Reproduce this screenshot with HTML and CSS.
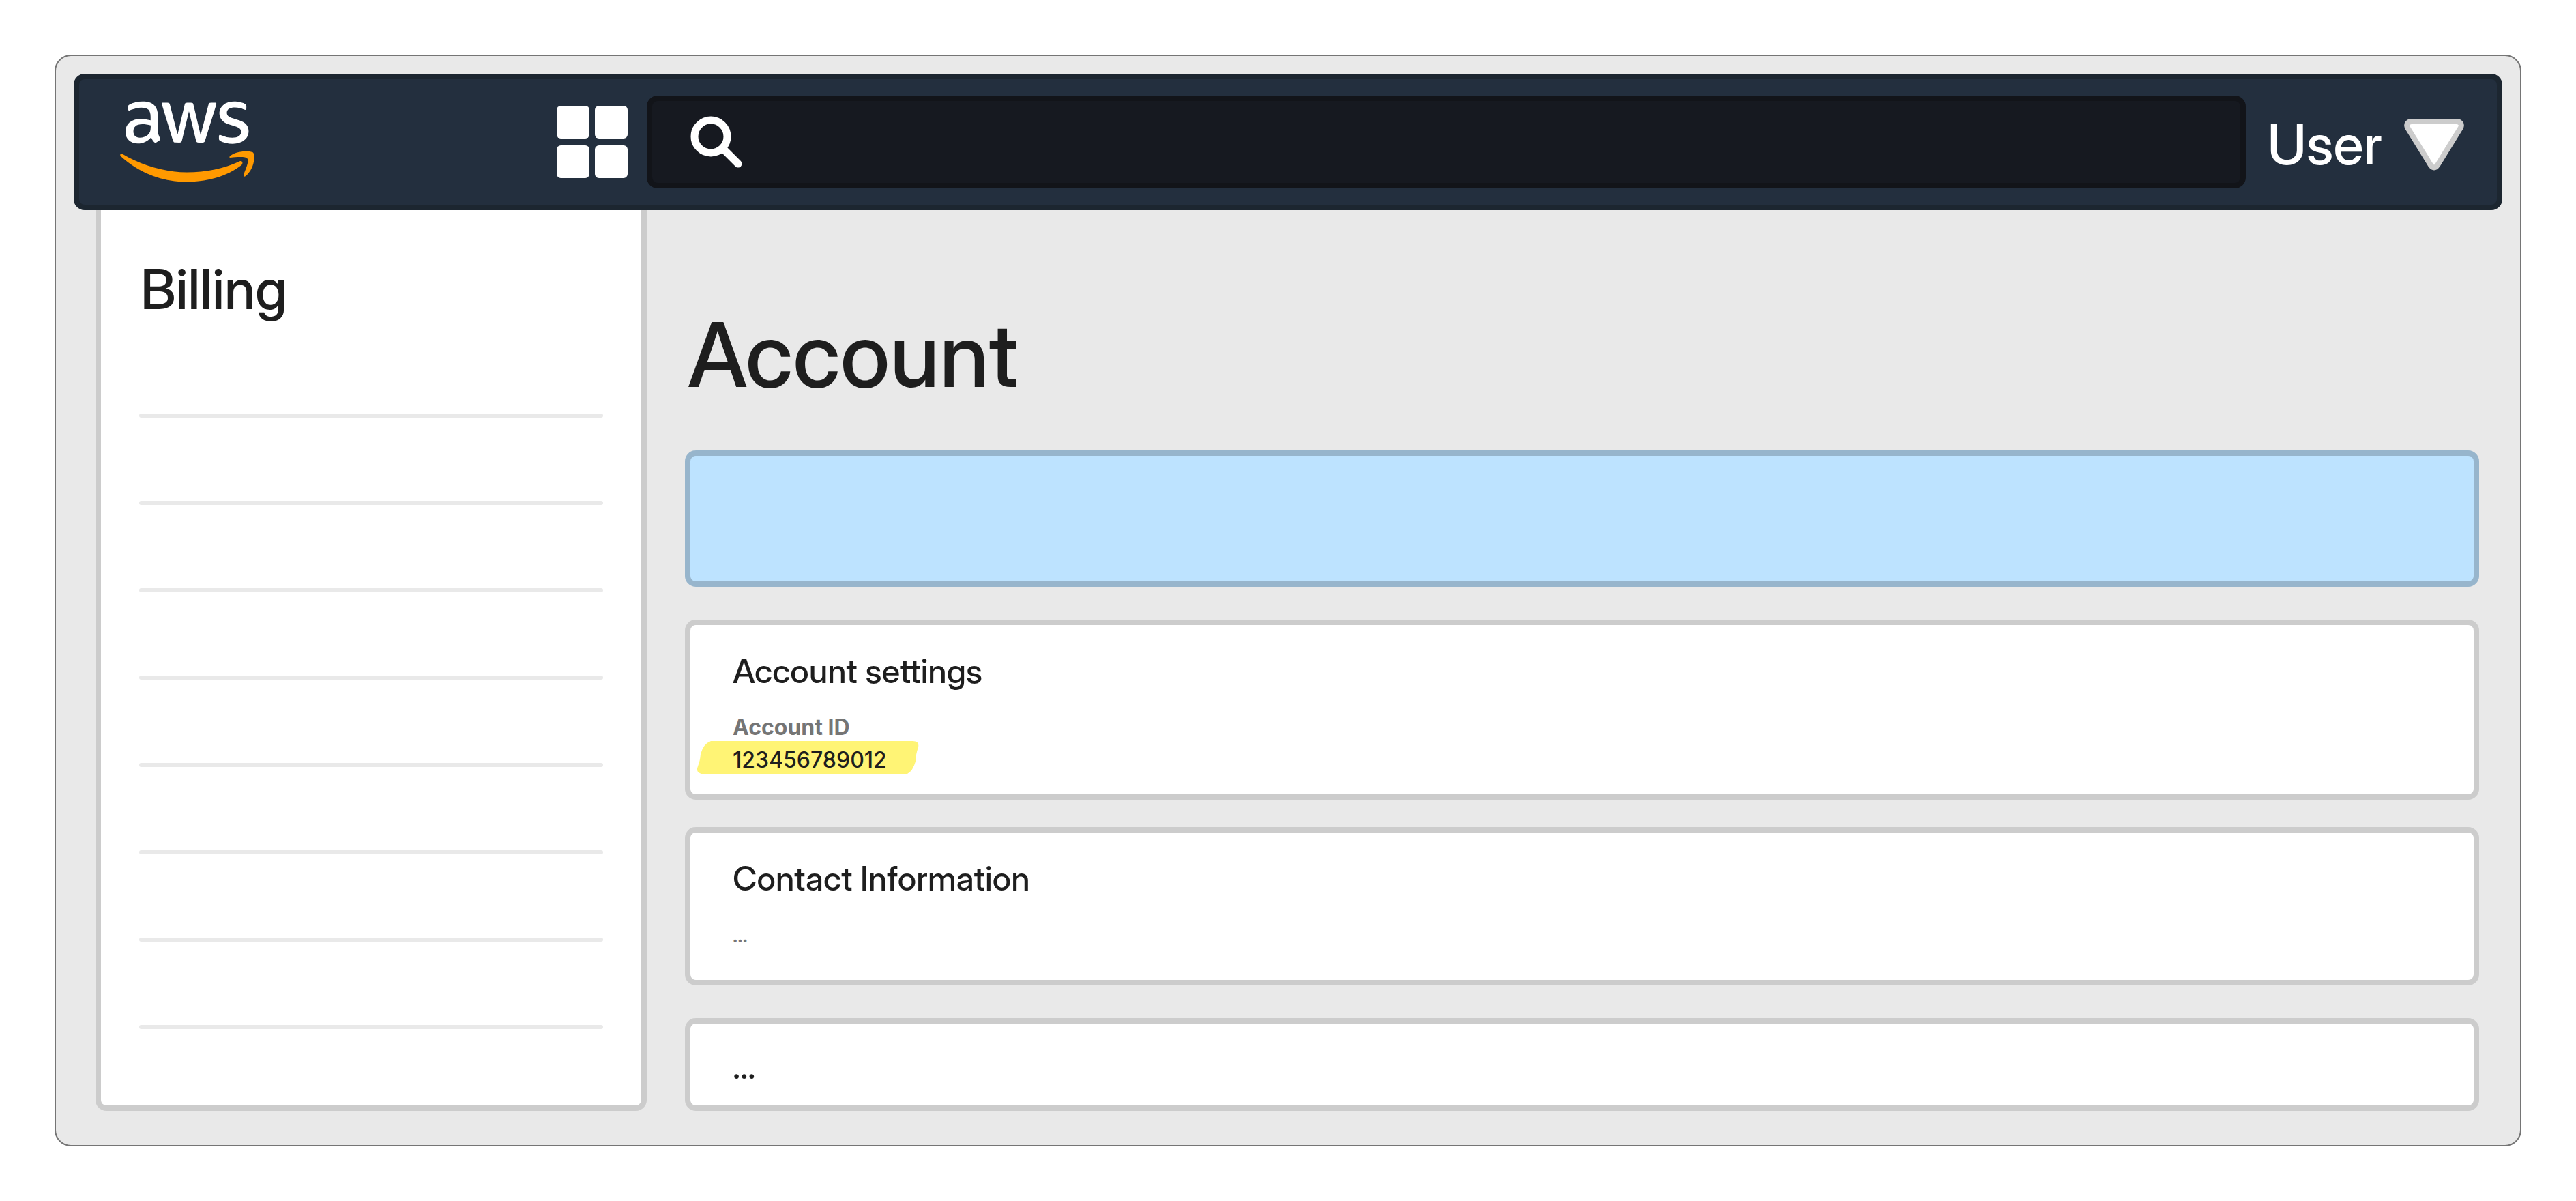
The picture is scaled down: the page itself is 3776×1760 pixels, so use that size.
FILE: index.html
```html
<!DOCTYPE html>
<html lang="en">
<head>
<meta charset="utf-8">
<title>Account</title>
<meta name="viewport" content="width=device-width, initial-scale=1">
<link rel="stylesheet" href="styles.css">
</head>
<body>
<div class="frame">
  <header class="topbar">
    <a class="logo" href="#" aria-label="aws">
      <svg viewBox="0 0 200 122" aria-hidden="true">
        <g transform="translate(0 1) scale(.66)">
          <path class="logo-word" d="M84.4 66.2c0 3.7.4 6.7 1.1 8.9.8 2.200 1.800 4.600 3.200 7.200.5.800.7 1.600.7 2.300 0 1-.6 2-1.900 3l-6.300 4.200c-.9.600-1.800.9-2.600.9-1 0-2-.5-3-1.400-1.400-1.500-2.600-3.100-3.600-4.700-1-1.700-2-3.600-3.100-5.900-7.800 9.200-17.600 13.800-29.400 13.800-8.400 0-15.100-2.400-20-7.200-4.900-4.800-7.400-11.200-7.400-19.200 0-8.500 3-15.400 9.100-20.600 6.100-5.200 14.200-7.800 24.500-7.800 3.400 0 6.900.3 10.600.8 3.700.5 7.500 1.300 11.500 2.200v-7.300c0-7.600-1.600-12.900-4.700-16-3.200-3.100-8.600-4.600-16.300-4.600-3.500 0-7.100.4-10.800 1.300-3.700.9-7.300 2-10.800 3.400-1.600.7-2.800 1.100-3.500 1.300-.7.200-1.200.3-1.600.3-1.400 0-2.100-1-2.100-3.100v-4.900c0-1.600.2-2.800.7-3.500.5-.7 1.400-1.400 2.800-2.100 3.500-1.800 7.700-3.300 12.600-4.500C39 1.800 44.200 1.200 49.700 1.200c11.900 0 20.600 2.700 26.200 8.100 5.500 5.400 8.300 13.600 8.300 24.600v32.400zM43.800 81.400c3.300 0 6.700-.6 10.300-1.800 3.600-1.200 6.800-3.400 9.500-6.400 1.600-1.900 2.800-4 3.400-6.400.6-2.400 1-5.300 1-8.700V54c-2.900-.7-6-1.300-9.200-1.700-3.200-.4-6.300-.6-9.400-.6-6.700 0-11.600 1.300-14.900 4-3.300 2.700-4.900 6.500-4.900 11.500 0 4.700 1.200 8.200 3.700 10.600 2.400 2.500 5.900 3.600 10.500 3.600z"/>
          <path class="logo-word" transform="translate(-1 0)" d="M124.100 92.200c-1.800 0-3-.3-3.800-1-.8-.6-1.500-2-2.100-3.900L94.700 10.200c-.6-2-.9-3.300-.9-4 0-1.600.8-2.500 2.400-2.500h9.800c1.900 0 3.200.3 3.900 1 .8.600 1.400 2 2 3.900l16.800 66.200 15.600-66.200c.5-2 1.100-3.300 1.900-3.900.8-.6 2.200-1 4-1h8c1.900 0 3.200.3 4 1 .8.600 1.500 2 1.900 3.900l15.800 67 17.300-67c.6-2 1.300-3.300 2-3.900.8-.6 2.100-1 3.900-1h9.300c1.600 0 2.500.8 2.500 2.500 0 .5-.1 1-.2 1.600-.1.600-.3 1.400-.7 2.500l-24.100 77.100c-.6 2-1.300 3.300-2.100 3.900-.8.600-2.100 1-3.800 1h-8.600c-1.900 0-3.200-.3-4-1-.8-.7-1.500-2-1.900-4l-15.500-64.400-15.400 64.400c-.5 2-1.100 3.300-1.900 4-.8.700-2.200 1-4 1z"/>
          <path class="logo-word" transform="translate(9 0)" d="M241.200 95c-5.200 0-10.400-.6-15.400-1.800-5-1.200-8.900-2.500-11.500-4-1.600-.9-2.700-1.900-3.100-2.800-.4-.9-.6-1.900-.6-2.800v-5.100c0-2.100.8-3.100 2.300-3.100.6 0 1.200.1 1.800.3.600.2 1.500.6 2.500 1 3.400 1.500 7.100 2.700 11 3.500 4 .8 7.900 1.200 11.900 1.200 6.300 0 11.200-1.100 14.600-3.300 3.400-2.200 5.200-5.400 5.200-9.500 0-2.800-.9-5.100-2.700-7-1.800-1.900-5.200-3.600-10.100-5.200L232.600 51.900c-7.300-2.300-12.700-5.700-16-10.200-3.300-4.400-5-9.300-5-14.500 0-4.200.9-7.900 2.700-11.100 1.800-3.200 4.200-6 7.200-8.200 3-2.300 6.400-4 10.400-5.200C235.900 1.500 240.100 1 244.500 1c2.200 0 4.500.1 6.700.4 2.300.3 4.400.7 6.500 1.100 2 .5 3.900 1 5.700 1.600 1.800.6 3.200 1.200 4.200 1.800 1.400.8 2.400 1.600 3 2.500.6.800.9 1.900.9 3.300v4.700c0 2.100-.8 3.200-2.300 3.200-.8 0-2.100-.4-3.800-1.200-5.700-2.600-12.100-3.900-19.200-3.900-5.700 0-10.200.9-13.300 2.800-3.100 1.900-4.700 4.800-4.700 8.900 0 2.800 1 5.200 3 7.100 2 1.900 5.700 3.800 11 5.500l14.200 4.500c7.200 2.300 12.400 5.500 15.500 9.600 3.100 4.100 4.600 8.800 4.600 14 0 4.300-.9 8.200-2.600 11.600-1.800 3.400-4.200 6.400-7.300 8.800-3.100 2.500-6.800 4.300-11.100 5.600-4.500 1.400-9.200 2.100-14.300 2.100z"/>
        </g>
        <path class="logo-smile" d="M2 78Q-1 79 1 82C28 106 60 119.500 98 119.500C132 119.500 160 109 178 95C181 91 179 88 175 89.500C152 100 126 105.500 98 105.500C66 105.500 31 95 4 79Q3 78 2 78Z"/>
        <path class="logo-smile" d="M161 82C168 75 186 73.500 194 76C199 77 198 100 184 111Q181 113 181 109C184 101 189 90 187 86C185 82 172 83 162 84Q159 84 161 82Z"/>
      </svg>
    </a>
    <button class="apps" type="button" aria-label="Services"><i></i><i></i><i></i><i></i></button>
    <label class="search">
      <svg viewBox="0 0 76 76" aria-hidden="true"><circle cx="30" cy="30" r="24"/><path d="M50 50L70 70"/></svg>
      <input type="search" aria-label="Search">
    </label>
    <button class="user" type="button">User
      <svg viewBox="0 0 88 76" aria-hidden="true"><path d="M10 4H78Q86 6 83 13L49 68Q44 75 39 68L5 13Q2 6 10 4Z"/></svg>
    </button>
  </header>
  <div class="body">
    <nav class="sidebar" aria-label="Billing">
      <h2>Billing</h2>
      <ul><li></li><li></li><li></li><li></li><li></li><li></li><li></li><li></li></ul>
    </nav>
    <main class="main">
      <h1>Account</h1>
      <section class="banner"></section>
      <section class="card settings">
        <h3>Account settings</h3>
        <dl>
          <dt>Account ID</dt>
          <dd><svg class="marker" viewBox="0 0 326 48" preserveAspectRatio="none" aria-hidden="true"><path d="M20 0H316Q326 0 324 9C320 22 321 22 320 30Q316 44 308 48H6Q-1 46 0 40C4 28 4 28 5 19Q9 4 20 0Z"/></svg><span>123456789012</span></dd>
        </dl>
      </section>
      <section class="card contact">
        <h3>Contact Information</h3>
        <p>...</p>
      </section>
      <section class="card more">
        <h3>...</h3>
      </section>
    </main>
  </div>
</div>
</body>
</html>
```

FILE: styles.css
```css
* { box-sizing: border-box; margin: 0; padding: 0; }

body {
  min-height: 100vh;
  padding: 80px;
  background: #fff;
  color: #1e1e1e;
  font-family: "Inter Display", Inter, "Liberation Sans", sans-serif;
  font-weight: 500;
}

.frame {
  padding: 26px 26px 50px;
  border: 2px solid #757575;
  border-radius: 24px;
  background: #e9e9e9;
}

.topbar {
  display: flex;
  align-items: center;
  height: 200px;
  padding: 0 48px 0 60px;
  border: 8px solid #1c2630;
  border-radius: 16px;
  background: #232f3e;
}

.logo { display: block; width: 200px; height: 122px; }
.logo svg { display: block; width: 100%; height: 100%; overflow: visible; }
.logo-word { fill: #fff; }
.logo-smile { fill: #f90; }

.apps {
  display: grid;
  grid-template-columns: 48px 48px;
  gap: 10px 8px;
  margin-left: 440px;
  border: 0;
  background: none;
}
.apps i { height: 48px; border-radius: 6px; background: #fff; }

.search {
  display: flex;
  flex: 1;
  align-items: center;
  gap: 24px;
  height: 136px;
  margin: 0 32px 0 28px;
  padding: 0 56px;
  border: 8px solid #121419;
  border-radius: 16px;
  background: #161920;
}
.search svg { width: 76px; height: 76px; fill: none; stroke: #fff; stroke-width: 11; stroke-linecap: round; }
.search input { flex: 1; border: 0; outline: 0; background: none; color: #fff; font: inherit; font-size: 48px; }

.user {
  display: flex;
  align-items: center;
  gap: 32px;
  padding-top: 8px;
  border: 0;
  background: none;
  color: #fff;
  font: inherit;
  font-size: 81px;
  line-height: 96px;
}
.user svg { width: 88px; height: 76px; fill: #fff; stroke: #ccc; stroke-width: 8; }

.body { display: flex; gap: 56px; padding: 0 34px 0 32px; }

.sidebar {
  width: 808px;
  padding: 68px 56px 0;
  border: 8px solid #ccc;
  border-top: 0;
  border-radius: 0 0 16px 16px;
  background: #fff;
}
.sidebar h2 { padding-left: 2px; font-size: 81px; font-weight: 500; line-height: 96px; }
.sidebar ul { display: grid; gap: 122px; padding-top: 134px; list-style: none; }
.sidebar li { height: 6px; border-radius: 3px; background: #e9e9e9; }

.main { flex: 1; padding-top: 136px; }
.main h1 { padding-left: 4px; font-size: 130px; font-weight: 500; line-height: 152px; }

.banner { height: 200px; margin-top: 64px; border: 8px solid #97b5cc; border-radius: 16px; background: #bde3ff; }

.card {
  padding: 40px 62px 0;
  border: 8px solid #ccc;
  border-radius: 16px;
  background: #fff;
}
.card h3 { font-size: 49px; font-weight: 500; line-height: 56px; }
.settings { height: 264px; margin-top: 48px; }
.contact { height: 232px; margin-top: 40px; }
.more { height: 136px; margin-top: 48px; padding-top: 36px; }

.card dl { padding-top: 30px; font-family: Inter, "Liberation Sans", sans-serif; font-size: 32px; line-height: 48px; }
.card dt { color: #757575; font-weight: 700; }
.card dd { position: relative; }
.card dd span { position: relative; }
.marker { position: absolute; top: -4px; left: -52px; width: 326px; height: 48px; fill: #fff475; }
.contact p { padding-top: 30px; color: #757575; font-size: 32px; line-height: 48px; }
```
